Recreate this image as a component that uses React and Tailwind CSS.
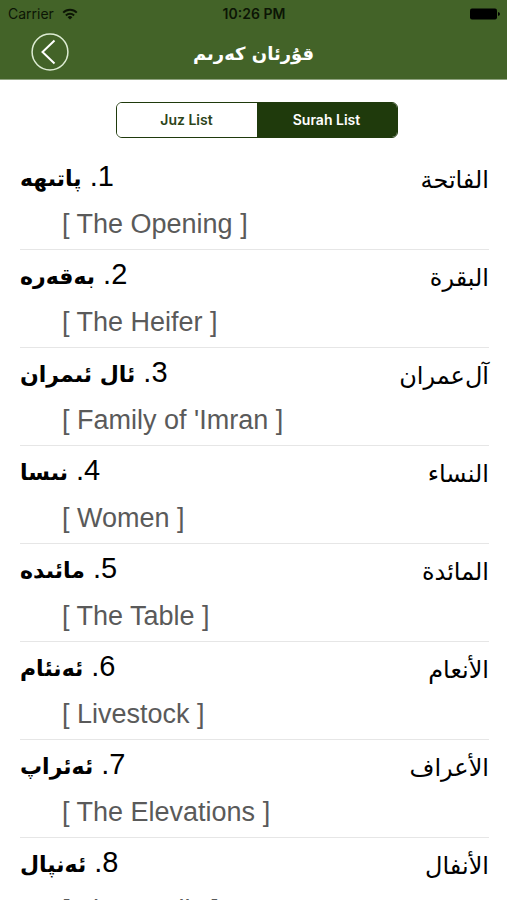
import React, { useState } from 'react';

const surahs = [
  { id: 1, name: 'پاتىھە', english: 'The Opening', arabic: 'الفاتحة' },
  { id: 2, name: 'بەقەرە', english: 'The Heifer', arabic: 'البقرة' },
  { id: 3, name: 'ئال ئىمران', english: "Family of 'Imran", arabic: 'آل‌عمران' },
  { id: 4, name: 'نىسا', english: 'Women', arabic: 'النساء' },
  { id: 5, name: 'مائىدە', english: 'The Table', arabic: 'المائدة' },
  { id: 6, name: 'ئەنئام', english: 'Livestock', arabic: 'الأنعام' },
  { id: 7, name: 'ئەئراپ', english: 'The Elevations', arabic: 'الأعراف' },
  { id: 8, name: 'ئەنپال', english: 'The Spoils', arabic: 'الأنفال' },
];

const WifiIcon = () => (
  <svg viewBox="0 0 16 12" className="w-4 h-3" fill="none" stroke="currentColor" strokeWidth="2">
    <path d="M1.2 4.6 A9.6 9.6 0 0 1 14.8 4.6" />
    <path d="M3.9 7.5 A5.8 5.8 0 0 1 12.1 7.5" />
    <path d="M8 11.6 L5.6 9.2 A3.4 3.4 0 0 1 10.4 9.2 Z" fill="currentColor" stroke="none" />
  </svg>
);

const BatteryIcon = () => (
  <svg viewBox="0 0 30 12" className="w-[30px] h-3" fill="currentColor">
    <rect x="0" y="0.5" width="27" height="11" rx="2" />
    <path d="M28 4 Q30 4.4 30 6 Q30 7.6 28 8 Z" />
  </svg>
);

const StatusBar = () => (
  <div className="grid grid-cols-3 items-center h-7 pl-2 pr-[7px] text-sm text-[#0c1505] font-[Inter,sans-serif]">
    <div className="flex items-center gap-2">
      <span>Carrier</span>
      <WifiIcon />
    </div>
    <span className="text-center font-semibold">10:26 PM</span>
    <div className="flex justify-end text-black">
      <BatteryIcon />
    </div>
  </div>
);

const Header = () => (
  <header className="bg-[#436328] border-b border-[#8fa37f]">
    <StatusBar />
    <div className="grid grid-cols-[1fr_auto_1fr] items-center h-[51px] px-[30px]">
      <button type="button" aria-label="Back" className="w-10 h-10 -mt-1 text-white">
        <svg viewBox="0 0 40 40" className="w-10 h-10" fill="none" stroke="currentColor">
          <circle cx="20" cy="20" r="17.9" stroke="#dcebd2" strokeWidth="1.5" />
          <path d="M24.5 8.5 L12.5 20 L24.5 31.5" strokeWidth="2" />
        </svg>
      </button>
      <h1 dir="rtl" className="text-lg font-bold text-white font-['DejaVu_Sans',sans-serif]">
        قۇرئان كەرىم
      </h1>
    </div>
  </header>
);

const Tabs = ({ active, onChange }) => (
  <div className="flex justify-center pt-[22px] pb-[14px] pl-1.5">
    <div className="flex w-[282px] border border-[#1f3a0c] rounded-md overflow-hidden">
      {['Juz List', 'Surah List'].map((tab) => (
        <button
          key={tab}
          type="button"
          aria-pressed={active === tab}
          onClick={() => onChange(tab)}
          className={`flex-1 h-[34px] text-sm font-semibold font-[Inter,sans-serif] ${
            active === tab ? 'bg-[#1f3a0c] text-white' : 'bg-white text-[#2c4419]'
          }`}
        >
          {tab}
        </button>
      ))}
    </div>
  </div>
);

const SurahRow = ({ surah }) => (
  <li className="h-[98px] border-b border-[#e6e6e6]">
    <div className="flex justify-between items-start h-12">
      <span dir="rtl" className="text-[29px] leading-[48px] font-['Liberation_Sans','DejaVu_Sans',sans-serif]">
        {surah.id}. <span className="text-[22px] font-bold font-['DejaVu_Sans',sans-serif]">{surah.name}</span>
      </span>
      <span dir="rtl" className="text-2xl leading-[56px] font-['DejaVu_Sans',sans-serif]">
        {surah.arabic}
      </span>
    </div>
    <p className="pl-[42px] text-[27px] leading-[48px] text-[#5a5a5a] font-['Liberation_Sans',sans-serif]">
      [ {surah.english} ]
    </p>
  </li>
);

const App = () => {
  const [active, setActive] = useState('Surah List');

  return (
    <div className="flex flex-col h-screen bg-white text-black">
      <Header />
      <Tabs active={active} onChange={setActive} />
      <ul className="flex-1 min-h-0 overflow-y-auto [scrollbar-width:none] pl-5 pr-[18px]">
        {surahs.map((surah) => (
          <SurahRow key={surah.id} surah={surah} />
        ))}
      </ul>
    </div>
  );
};

export default App;
